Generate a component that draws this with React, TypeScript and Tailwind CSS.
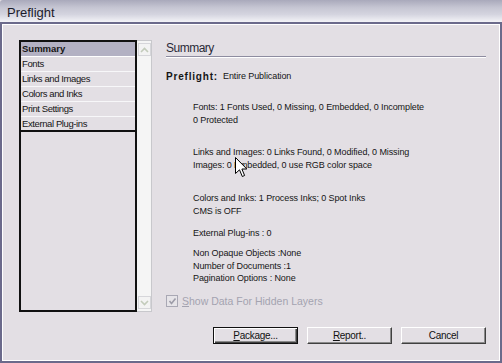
import React from 'react';

const sections = ['Summary', 'Fonts', 'Links and Images', 'Colors and Inks', 'Print Settings', 'External Plug-ins'];

const ScrollArrow: React.FC<{ down?: boolean }> = ({ down }) => (
  <div className="w-[13px] h-[13px] border border-[#d6d6da] bg-[#f3f3f3] flex items-center justify-center">
    <svg width="9" height="6" viewBox="0 0 9 6">
      <path
        d={down ? 'M1 1 L4.5 4.5 L8 1' : 'M1 5 L4.5 1.5 L8 5'}
        fill="none"
        stroke="#c3cbbb"
        strokeWidth="1.6"
      />
    </svg>
  </div>
);

const DialogButton: React.FC<{ isDefault?: boolean; children: React.ReactNode }> = ({ isDefault, children }) => (
  <button
    className={
      'w-[85px] h-[17px] bg-[#e3dfe4] text-[10px] tracking-[-0.3px] leading-none text-[#111] flex items-center justify-center ' +
      (isDefault
        ? 'border border-[#111] shadow-[inset_1px_1px_0_#fff,inset_-1px_-1px_0_#404040,inset_-2px_-2px_0_#8a8a8a]'
        : 'border-t border-l border-t-white border-l-white border-b border-r border-b-[#404040] border-r-[#404040] shadow-[inset_-1px_-1px_0_#8a8a8a]')
    }
  >
    {children}
  </button>
);

const App: React.FC = () => {
  return (
    <div className="relative w-[502px] h-[363px] bg-[#e3dfe4] flex flex-col overflow-hidden font-['Liberation_Sans',Arial,sans-serif] text-[#151515]">
      {/* title bar */}
      <div className="h-[22px] rounded-tl-[3px] bg-[linear-gradient(to_bottom,#a9a9bb_0%,#c6c6d3_35%,#d4d4df_65%,#f3f3f7_100%)] pl-[7px] pt-[5px]">
        <span className="block text-[13px] leading-[16px] text-[#1b1b2b]">Preflight</span>
      </div>

      {/* body */}
      <div className="flex-1 flex flex-col border-2 border-[#6b6a8b] shadow-[inset_1px_1px_0_#fff,inset_-1px_-1px_0_#fff] pl-[17px] pt-[16px] pr-[14px]">
        <div className="flex h-[272px]">
          {/* section list */}
          <div className="flex">
            <div className="w-[118px] border-2 border-[#111] flex flex-col">
              {sections.map((s, i) => (
                <div
                  key={s}
                  className={
                    'h-[15px] pl-[1px] flex items-center leading-none ' +
                    (i === 0 ? 'bg-[#b3b1c3] font-bold text-[9.5px] border-b border-white ' : 'text-[9.5px] tracking-[-0.4px] ') +
                    (i === sections.length - 1 ? 'border-b-2 border-[#111] h-[15px]' : 'border-b border-[#f7f7f9]')
                  }
                >
                  {s}
                </div>
              ))}
            </div>
            <div className="w-[15px] border-y border-r border-[#c8c8cc] bg-[#f5f5f5] flex flex-col justify-between px-[1px] py-[2px]">
              <ScrollArrow />
              <ScrollArrow down />
            </div>
          </div>

          {/* summary panel */}
          <div className="ml-[14px] w-[320px] flex flex-col text-[9px] tracking-[-0.1px]">
            <div className="mt-[1px] h-[16px] text-[12px] tracking-[-0.5px] leading-[15px] text-[#2a2a38] border-b border-[#8e8ca0] shadow-[0_1px_0_#fff]">
              Summary
            </div>
            <div className="mt-[13px] leading-[13px] flex">
              <span className="w-[57px] font-bold text-[10px] tracking-[0.8px]">Preflight:</span>
              <span>Entire Publication</span>
            </div>
            <div className="pl-[27px]">
              <div className="mt-[18px] leading-[13px]">
                <div>Fonts: 1 Fonts Used, 0 Missing, 0 Embedded, 0 Incomplete</div>
                <div>0 Protected</div>
              </div>
              <div className="mt-[19px] leading-[13px]">
                <div>Links and Images: 0 Links Found, 0 Modified, 0 Missing</div>
                <div>Images: 0 Embedded, 0 use RGB color space</div>
              </div>
              <div className="mt-[20px] leading-[13px]">
                <div>Colors and Inks: 1 Process Inks; 0 Spot Inks</div>
                <div>CMS is OFF</div>
              </div>
              <div className="mt-[9px] leading-[13px]">External Plug-ins : 0</div>
              <div className="mt-[7px] leading-[12.5px]">
                <div>Non Opaque Objects :None</div>
                <div>Number of Documents :1</div>
                <div>Pagination Options : None</div>
              </div>
            </div>
            <div className="mt-[9px] flex items-center gap-[4px] text-[10.5px] tracking-normal text-[#a4a3b0]">
              <div className="w-[12px] h-[12px] border border-[#a9a8b4] bg-[#e6e4e8] flex items-center justify-center">
                <svg width="9" height="9" viewBox="0 0 9 9">
                  <path d="M1.5 4 L3.5 6.5 L7.5 1.5" fill="none" stroke="#9d9ca8" strokeWidth="1.6" />
                </svg>
              </div>
              <span>
                <span className="underline">S</span>how Data For Hidden Layers
              </span>
            </div>
          </div>
        </div>

        {/* buttons */}
        <div className="mt-[15px] flex justify-end gap-[9px]">
          <DialogButton isDefault>
            <span><span className="underline">P</span>ackage...</span>
          </DialogButton>
          <DialogButton>
            <span><span className="underline">R</span>eport..</span>
          </DialogButton>
          <DialogButton>Cancel</DialogButton>
        </div>
      </div>

      {/* mouse pointer */}
      <svg className="absolute left-[235px] top-[157px]" width="13" height="21" viewBox="0 0 13 21">
        <path d="M0.5 0.5 L0.5 16.5 L4.5 12.8 L7.3 19.5 L9.6 18.5 L6.9 12 L11.8 12 Z" fill="#fff" stroke="#000" strokeWidth="1" />
      </svg>
    </div>
  );
};

export default App;
